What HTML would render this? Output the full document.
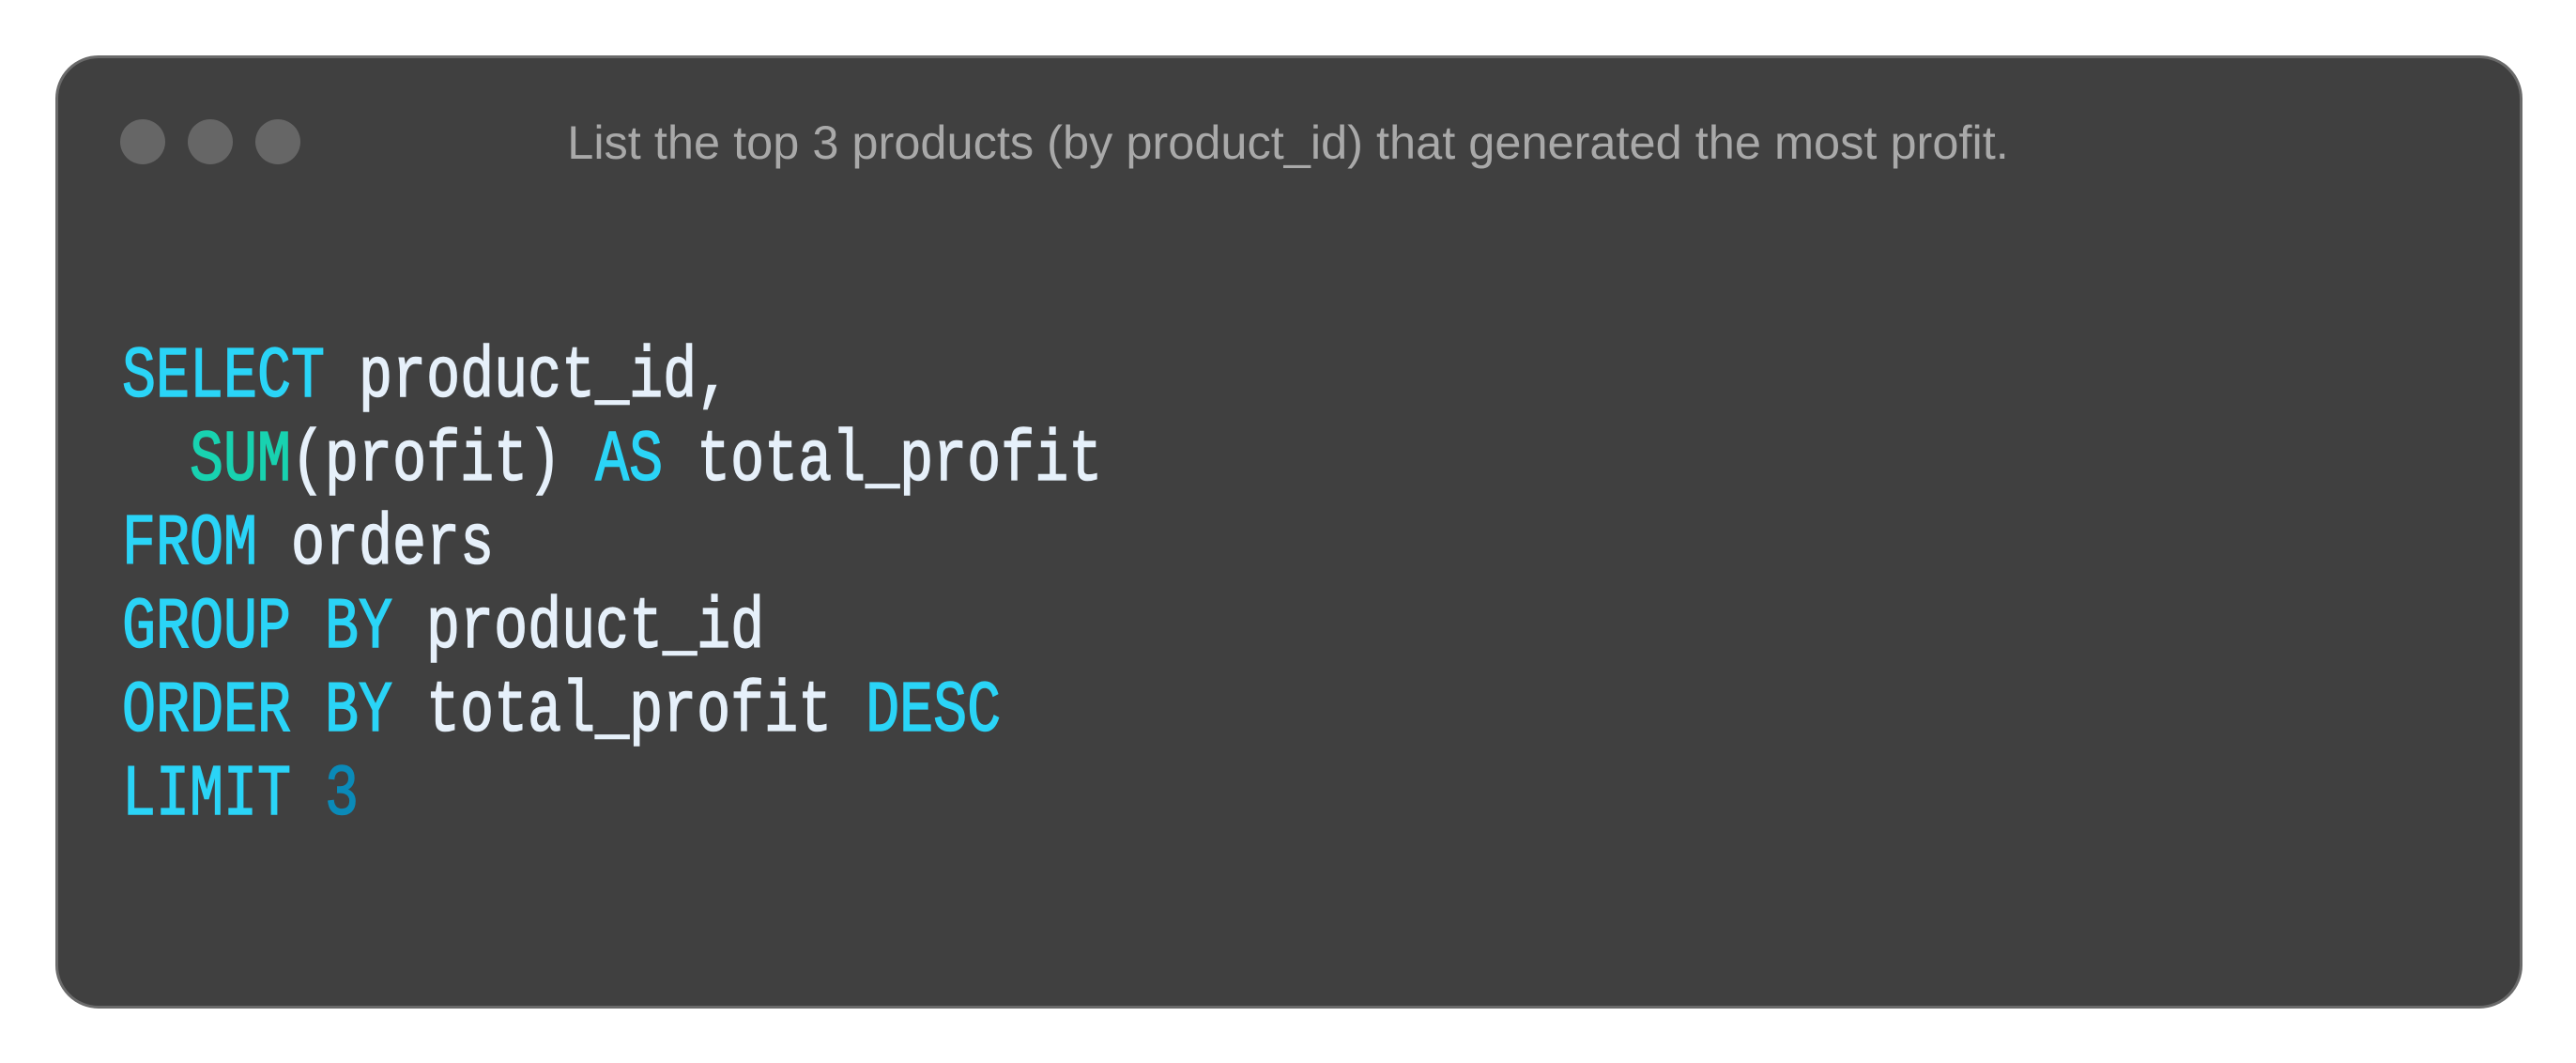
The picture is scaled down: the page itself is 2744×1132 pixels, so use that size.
<!DOCTYPE html>
<html><head><meta charset="utf-8"><style>
html,body{margin:0;padding:0;background:#fff;width:2744px;height:1132px;overflow:hidden}
.card{position:absolute;left:59px;top:59px;width:2622px;height:1009px;background:#404040;border:3px solid #6a6a6a;border-radius:46px}
.dot{position:absolute;top:127px;width:48px;height:48px;border-radius:50%;background:#666}
.title{position:absolute;left:0;width:2744px;top:120px;text-align:center;font-family:"Liberation Sans",sans-serif;font-size:50.5px;color:#a9a9a9;line-height:64px}
.code{position:absolute;left:130px;top:0;font-family:"Liberation Mono",monospace;font-size:60px;color:#e6f0fa;white-space:pre;-webkit-text-stroke:1.2px currentColor}
.ln{position:absolute;left:0;height:89px;line-height:89px;transform:scaleY(1.28);transform-origin:0 70%}
.k{color:#2ad4f7}.f{color:#18d2b0}.n{color:#0a8ab8}
</style></head><body>
<div class="card"></div>
<div class="dot" style="left:128px"></div>
<div class="dot" style="left:200px"></div>
<div class="dot" style="left:272px"></div>
<div class="title">List the top 3 products (by product_id) that generated the most profit.</div>
<div class="code">
<div class="ln" style="top:364px"><span class="k">SELECT</span> product_id,</div>
<div class="ln" style="top:453px">  <span class="f">SUM</span>(profit) <span class="k">AS</span> total_profit</div>
<div class="ln" style="top:542px"><span class="k">FROM</span> orders</div>
<div class="ln" style="top:631px"><span class="k">GROUP BY</span> product_id</div>
<div class="ln" style="top:720px"><span class="k">ORDER BY</span> total_profit <span class="k">DESC</span></div>
<div class="ln" style="top:809px"><span class="k">LIMIT</span> <span class="n">3</span></div>
</div>
</body></html>
